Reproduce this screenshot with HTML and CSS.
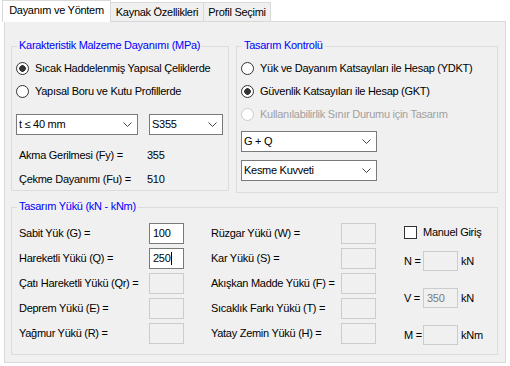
FILE: index.html
```html
<!DOCTYPE html>
<html>
  <head>
    <title>Dayanım ve Yöntem</title>
    <link rel="stylesheet" href="styles.css">
  </head>
  <body>
    <div class="tabs">
      <div class="tab active">Dayanım ve Yöntem</div>
      <div class="tab kaynak">Kaynak Özellikleri</div>
      <div class="tab profil">Profil Seçimi</div>
    </div>

    <div class="page">
      <div class="top-row">
        <div class="group material">
          <span class="group-title">Karakteristik Malzeme Dayanımı (MPa)</span>
          <div class="radio-row"><span class="radio checked"></span>Sıcak Haddelenmiş Yapısal Çeliklerde</div>
          <div class="radio-row"><span class="radio"></span>Yapısal Boru ve Kutu Profillerde</div>
          <div class="combo-row">
            <div class="combo thickness">
              <span>t ≤ 40 mm</span>
              <svg width="9" height="5" viewBox="0 0 9 5"><polyline points="0.5,0.5 4.5,4.5 8.5,0.5" /></svg>
            </div>
            <div class="combo steel">
              <span>S355</span>
              <svg width="9" height="5" viewBox="0 0 9 5"><polyline points="0.5,0.5 4.5,4.5 8.5,0.5" /></svg>
            </div>
          </div>
          <div class="value-row first"><span class="value-label">Akma Gerilmesi (Fy) =</span><span>355</span></div>
          <div class="value-row"><span class="value-label">Çekme Dayanımı (Fu) =</span><span>510</span></div>
        </div>

        <div class="group control">
          <span class="group-title">Tasarım Kontrolü</span>
          <div class="radio-row"><span class="radio"></span>Yük ve Dayanım Katsayıları ile Hesap (YDKT)</div>
          <div class="radio-row"><span class="radio checked"></span>Güvenlik Katsayıları ile Hesap (GKT)</div>
          <div class="radio-row disabled"><span class="radio"></span>Kullanılabilirlik Sınır Durumu için Tasarım</div>
          <div class="combo wide first">
            <span>G + Q</span>
            <svg width="9" height="5" viewBox="0 0 9 5"><polyline points="0.5,0.5 4.5,4.5 8.5,0.5" /></svg>
          </div>
          <div class="combo wide">
            <span>Kesme Kuvveti</span>
            <svg width="9" height="5" viewBox="0 0 9 5"><polyline points="0.5,0.5 4.5,4.5 8.5,0.5" /></svg>
          </div>
        </div>
      </div>

      <div class="group loads">
        <span class="group-title">Tasarım Yükü (kN - kNm)</span>
        <div class="load-col">
          <span>Sabit Yük (G) =</span><div class="box">100</div>
          <span>Hareketli Yükü (Q) =</span><div class="box">250<span class="caret"></span></div>
          <span>Çatı Hareketli Yükü (Qr) =</span><div class="box disabled"></div>
          <span>Deprem Yükü (E) =</span><div class="box disabled"></div>
          <span>Yağmur Yükü (R) =</span><div class="box disabled"></div>
        </div>
        <div class="load-col second">
          <span>Rüzgar Yükü (W) =</span><div class="box disabled"></div>
          <span>Kar Yükü (S) =</span><div class="box disabled"></div>
          <span>Akışkan Madde Yükü (F) =</span><div class="box disabled"></div>
          <span>Sıcaklık Farkı Yükü (T) =</span><div class="box disabled"></div>
          <span>Yatay Zemin Yükü (H) =</span><div class="box disabled"></div>
        </div>
        <div class="manual">
          <div class="check-row"><span class="checkbox"></span>Manuel Giriş</div>
          <div class="force-row"><span class="force-label">N =</span><div class="box small disabled"></div><span class="unit">kN</span></div>
          <div class="force-row"><span class="force-label">V =</span><div class="box small disabled gray">350</div><span class="unit">kN</span></div>
          <div class="force-row"><span class="force-label">M =</span><div class="box small disabled"></div><span class="unit">kNm</span></div>
        </div>
      </div>
    </div>
  </body>
</html>
```

FILE: styles.css
```css
* {
  box-sizing: border-box;
  margin: 0;
  padding: 0;
}

body {
  font-family: "Liberation Sans", Arial, sans-serif;
  font-size: 11px;
  line-height: 13px;
  letter-spacing: -0.28px;
  color: #000000;
  background: #ffffff;
  width: 510px;
  height: 366px;
  overflow: hidden;
}

/* tab strip */
.tabs {
  display: flex;
  align-items: flex-end;
  height: 21px;
  padding-left: 2px;
}

.tab {
  height: 19px;
  padding-top: 3px;
  margin-left: -1px;
  text-align: center;
  white-space: nowrap;
  border: 1px solid #d9d9d9;
  border-bottom: none;
  background: #f0f0f0;
}

.tab.active {
  position: relative;
  z-index: 1;
  width: 109px;
  height: 22px;
  margin-left: 0;
  margin-bottom: -1px;
  background: #ffffff;
}

.tab.kaynak {
  width: 94px;
}

.tab.profil {
  width: 68px;
}

.page {
  width: 502px;
  height: 342px;
  margin-left: 4px;
  padding: 24px 0 0 6px;
  border: 1px solid #d9d9d9;
  background: #f0f0f0;
}

.top-row {
  display: flex;
  align-items: flex-start;
  gap: 7px;
}

/* group boxes */
.group {
  position: relative;
  border: 1px solid #dcdcdc;
}

.group-title {
  position: absolute;
  top: -8px;
  left: 5px;
  padding: 0 2px;
  background: #f0f0f0;
  color: #0000ff;
  white-space: nowrap;
}

.group.material {
  width: 218px;
  height: 145px;
  padding-top: 10px;
}

.group.control {
  width: 262px;
  height: 147px;
  padding-top: 10px;
}

.group.loads {
  display: flex;
  align-items: flex-start;
  width: 487px;
  height: 148px;
  margin-top: 14px;
  padding: 15px 0 0 7px;
}

/* radios */
.radio-row {
  display: flex;
  align-items: center;
  height: 23px;
  padding-left: 4px;
  white-space: nowrap;
}

.radio {
  flex-shrink: 0;
  width: 13px;
  height: 13px;
  margin-right: 6px;
  border: 1px solid #333333;
  border-radius: 50%;
  background: #ffffff;
}

.radio.checked {
  background: radial-gradient(circle, #333333 0 3px, #ffffff 3.6px);
}

.radio-row.disabled {
  color: #a0a0a0;
}

.radio-row.disabled .radio {
  border-color: #cccccc;
}

/* combo boxes */
.combo-row {
  display: flex;
  gap: 11px;
  margin-top: 11px;
  padding-left: 4px;
}

.combo {
  display: flex;
  align-items: center;
  justify-content: space-between;
  height: 21px;
  padding: 0 5px 0 2px;
  line-height: 19px;
  border: 1px solid #7a7a7a;
  background: #ffffff;
  white-space: nowrap;
}

.combo svg {
  fill: none;
  stroke: #444444;
  stroke-width: 1;
}

.combo.thickness {
  width: 122px;
}

.combo.steel {
  width: 74px;
}

.combo.wide {
  width: 136px;
  margin: 8px 0 0 4px;
}

.combo.wide.first {
  margin-top: 5px;
}

.value-row {
  display: flex;
  margin-top: 11px;
  padding-left: 7px;
}

.value-row.first {
  margin-top: 14px;
}

.value-label {
  width: 128px;
}

/* load inputs */
.load-col {
  display: grid;
  grid-template-columns: 130px 35px;
  grid-auto-rows: 21px;
  row-gap: 4px;
  align-items: center;
  white-space: nowrap;
}

.load-col.second {
  margin-left: 27px;
}

.box {
  width: 35px;
  height: 21px;
  padding-left: 3px;
  line-height: 19px;
  border: 1px solid #7a7a7a;
  background: #ffffff;
}

.box.disabled {
  border-color: #cccccc;
  background: #f0f0f0;
}

.box.small {
  height: 20px;
  line-height: 18px;
}

.box.gray {
  color: #7a7a7a;
}

.caret {
  display: inline-block;
  width: 1px;
  height: 13px;
  vertical-align: -3px;
  background: #000000;
}

.manual {
  margin-left: 28px;
}

.check-row {
  display: flex;
  align-items: center;
  height: 13px;
  margin-top: 3px;
  white-space: nowrap;
}

.checkbox {
  width: 13px;
  height: 13px;
  margin-right: 6px;
  border: 1px solid #333333;
  background: #ffffff;
}

.force-row {
  display: flex;
  align-items: center;
  margin-top: 17px;
}

.check-row + .force-row {
  margin-top: 12px;
}

.force-label {
  width: 19px;
  white-space: nowrap;
}

.unit {
  margin-left: 3px;
}
```
